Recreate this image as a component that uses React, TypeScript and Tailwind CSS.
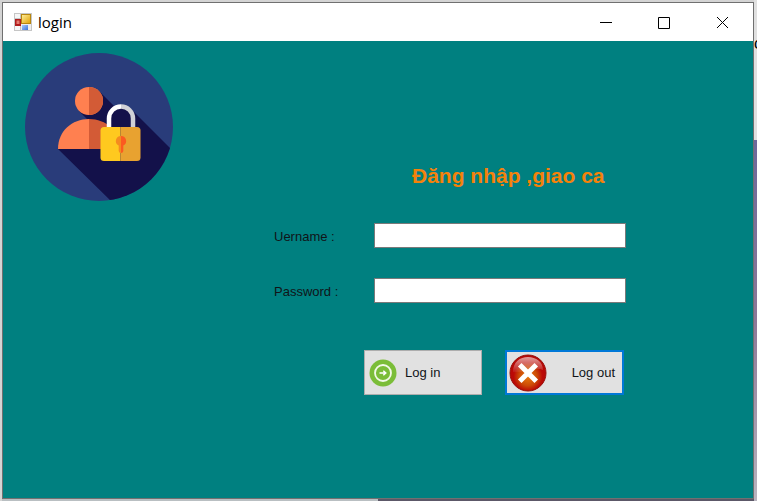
import type { ReactNode } from "react";

function FormIcon() {
  return (
    <svg viewBox="0 0 18 18" className="h-[18px] w-[18px]" aria-hidden="true">
      <defs>
        <linearGradient id="gold" x1="0" y1="0" x2="1" y2="1">
          <stop offset="0" stopColor="#fff0a0" />
          <stop offset="1" stopColor="#e0a000" />
        </linearGradient>
        <linearGradient id="azure" x1="0" y1="0" x2="1" y2="1">
          <stop offset="0" stopColor="#a8ccff" />
          <stop offset="1" stopColor="#3a72d8" />
        </linearGradient>
      </defs>
      <rect width="18" height="18" fill="#c6c6c6" />
      <rect x="1" y="1" width="5" height="4" fill="#f6f6f6" />
      <rect x="1" y="13" width="5" height="4" fill="#f6f6f6" />
      <rect x="7" y="11" width="10" height="6" fill="#eeeeee" />
      <rect x="1" y="6" width="6" height="7" fill="#b01c1c" />
      <rect x="2.5" y="7.5" width="3" height="3.5" fill="#e47b70" />
      <rect x="7.5" y="1.5" width="9" height="9" fill="url(#gold)" stroke="#b88710" />
      <rect x="8" y="12" width="6" height="5" fill="url(#azure)" />
    </svg>
  );
}

function AccountLock() {
  return (
    <svg viewBox="0 0 148 148" className="h-[148px] w-[148px] shrink-0" role="img" aria-label="Account">
      <defs>
        <clipPath id="disc">
          <circle cx="74" cy="74" r="74" />
        </clipPath>
      </defs>
      <g clipPath="url(#disc)">
        <rect width="148" height="148" fill="#293c7a" />
        <path d="M74 38L91 55H105L150 100V150H88L33 96L66 70L54 58Z" fill="#13114a" />
      </g>
      <circle cx="64" cy="48" r="14" fill="#ff8050" />
      <path d="M64 34a14 14 0 0 1 0 28z" fill="#d35b36" />
      <path d="M33 96C33 78 47 66 64 66V96z" fill="#ff8050" />
      <path d="M64 66C81 66 95 78 95 96H64z" fill="#d35b36" />
      <path d="M84 75V65.5a12 12 0 0 1 24 0V75z" fill="#13114a" />
      <path d="M84 75V65.5a12 12 0 0 1 12-12" fill="none" stroke="#fff" strokeWidth="4.5" />
      <path d="M96 53.500a12 12 0 0 1 12 12V75" fill="none" stroke="#d0d1d6" strokeWidth="4.5" />
      <path d="M79 74H95.500V108H79a3.500 3.500 0 0 1-3.500-3.500V77.500A3.500 3.500 0 0 1 79 74z" fill="#ffc91f" />
      <path d="M95.500 74H112a3.500 3.500 0 0 1 3.500 3.500v27a3.500 3.500 0 0 1-3.500 3.500H95.500z" fill="#e8a230" />
      <path d="M96 83a5 5 0 0 0-2.300 9.500V98a2.300 2.300 0 0 0 2.300 2z" fill="#f58b1f" />
      <path d="M96 83a5 5 0 0 1 2.300 9.500V98a2.300 2.300 0 0 1-2.300 2z" fill="#fb5a20" />
    </svg>
  );
}

function EnterIcon() {
  return (
    <svg viewBox="0 0 28 28" className="h-7 w-7 shrink-0" aria-hidden="true">
      <circle cx="14" cy="14" r="13.5" fill="#7bbd38" />
      <circle cx="14" cy="14" r="8" fill="none" stroke="#f2f9e8" strokeWidth="1.8" />
      <path d="M10.500 14h6.500M14.300 11.700L16.800 14l-2.500 2.300" fill="none" stroke="#fff" strokeWidth="1.5" />
    </svg>
  );
}

function CancelIcon() {
  return (
    <svg viewBox="0 0 38 38" className="h-[38px] w-[38px] shrink-0" aria-hidden="true">
      <defs>
        <radialGradient id="ember" cx="0.5" cy="0.6" r="0.5">
          <stop offset="0" stopColor="#e87a0c" />
          <stop offset="0.5" stopColor="#cc4a06" />
          <stop offset="0.8" stopColor="#bb0a06" />
          <stop offset="1" stopColor="#b80806" />
        </radialGradient>
        <linearGradient id="shine" x1="0" y1="0" x2="0" y2="1">
          <stop offset="0" stopColor="#fff" stopOpacity="0.6" />
          <stop offset="1" stopColor="#fff" stopOpacity="0.05" />
        </linearGradient>
      </defs>
      <circle cx="19" cy="19" r="18" fill="url(#ember)" stroke="#98100b" />
      <path d="M4 18C4 8 11 3 19 3s15 5 15 13C25 12 15 20 4 18z" fill="url(#shine)" />
      <path d="M12.500 12.500l13 13M25.500 12.500l-13 13" stroke="#fff" strokeWidth="5" strokeLinecap="square" />
    </svg>
  );
}

function CaptionButton({ label, children }: { label: string; children: ReactNode }) {
  return (
    <button type="button" aria-label={label} className="flex h-full w-[58px] items-center justify-center">
      <svg viewBox="0 0 13 13" className="h-[13px] w-[13px]" fill="none" stroke="#000" aria-hidden="true">
        {children}
      </svg>
    </button>
  );
}

function Field({ id, label, type }: { id: string; label: string; type: string }) {
  return (
    <div className="flex items-center">
      <label htmlFor={id} className="w-[100px] shrink-0 pt-[2px]">
        {label}
      </label>
      <input id={id} type={type} className="h-[25px] min-w-0 flex-1 border border-[#7a7a7a] bg-white px-1 outline-none" />
    </div>
  );
}

export default function App() {
  return (
    <div className="flex min-h-screen bg-[#d4d4d4] font-['Liberation_Sans',sans-serif] text-[13px] text-[#101418]">
      <div className="flex min-w-0 flex-1 flex-col pl-[2px] pt-[2px]">
        <div className="flex flex-1 flex-col border border-[#707070] bg-[#008080]">
          <header className="flex h-[38px] items-center bg-white pl-[11px] pr-[2px] text-black">
            <FormIcon />
            <h1 className="flex-1 pl-[6px] font-['Open_Sans',sans-serif] text-[15px]">login</h1>
            <CaptionButton label="Minimize">
              <path d="M0 6.500h12" />
            </CaptionButton>
            <CaptionButton label="Maximize">
              <path d="M.5 1.500h11v11H.5z" />
            </CaptionButton>
            <CaptionButton label="Close">
              <path d="M1 1l11 11M12 1L1 12" />
            </CaptionButton>
          </header>
          <main className="flex flex-1 items-start pl-[22px] pt-3">
            <AccountLock />
            <form className="ml-[101px] mt-[108px] w-[352px]" onSubmit={(e) => e.preventDefault()}>
              <h2 className="pl-[138px] text-[21px] leading-[30px] font-bold whitespace-nowrap text-[#f5820a]">
                Đăng nhập ,giao ca
              </h2>
              <div className="mt-8 flex flex-col gap-[30px]">
                <Field id="username" label="Uername :" type="text" />
                <Field id="password" label="Password :" type="password" />
              </div>
              <div className="mt-[47px] flex gap-[23px] pl-[90px]">
                <button type="submit" className="flex h-[45px] w-[118px] items-center gap-2 border border-[#adadad] bg-[#e1e1e1] pl-1">
                  <EnterIcon />
                  Log in
                </button>
                <button type="button" className="flex h-[45px] w-[119px] items-center justify-between border-2 border-[#0078d7] bg-[#e1e1e1] pr-[7px] pl-[2px]">
                  <CancelIcon />
                  Log out
                </button>
              </div>
            </form>
          </main>
        </div>
        <div className="flex h-[2px]">
          <div className="flex-1 bg-[#b9bfc2]" />
          <div className="flex-1 bg-[#5c5868]" />
        </div>
      </div>
      <div className="flex w-[3px] flex-col overflow-hidden">
        <div className="h-[140px] bg-[#e0e0e0] pt-8 text-base text-black">c</div>
        <div className="flex-1 bg-linear-to-b from-[#6c689b] via-[#8c7898] to-[#b9b5bf]" />
      </div>
    </div>
  );
}
